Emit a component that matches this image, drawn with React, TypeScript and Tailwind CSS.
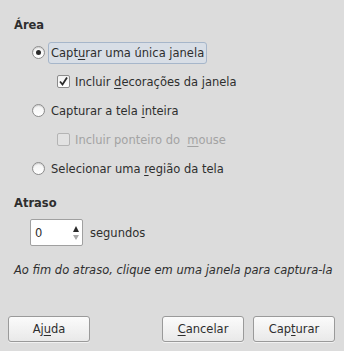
import React from 'react';

function Radio({ checked }: { checked?: boolean }) {
  return (
    <span className="w-[13px] h-[13px] rounded-full border border-[#8c8c8c] bg-gradient-to-b from-[#f2f2f2] to-white flex items-center justify-center shrink-0 shadow-[inset_0_1px_1px_rgba(0,0,0,0.15)]">
      {checked && <span className="w-[5px] h-[5px] rounded-full bg-[#2a2a2a]" />}
    </span>
  );
}

function Check({ checked, disabled }: { checked?: boolean; disabled?: boolean }) {
  return (
    <span
      className={
        disabled
          ? 'w-[13px] h-[13px] rounded-[2px] border border-[#b4b4b4] bg-[#e2e2e2] shrink-0'
          : 'w-[13px] h-[13px] rounded-[2px] border border-[#8c8c8c] bg-gradient-to-b from-[#f2f2f2] to-white flex items-center justify-center shrink-0'
      }
    >
      {checked && (
        <svg width="11" height="11" viewBox="0 0 11 11">
          <path d="M2 5.5 L4.5 8.5 L9 1.5" fill="none" stroke="#2a2a2a" strokeWidth="1.8" />
        </svg>
      )}
    </span>
  );
}

function Btn({ children }: { children: React.ReactNode }) {
  return (
    <button className="w-[82px] h-[26px] rounded-[3px] border border-[#9a9a9a] bg-gradient-to-b from-[#fbfbfb] to-[#e9e9e9] text-[#2e2e2e] flex items-center justify-center shadow-[0_1px_0_rgba(255,255,255,0.6)]">
      {children}
    </button>
  );
}

const U = ({ children }: { children: React.ReactNode }) => (
  <span className="underline underline-offset-2 decoration-1">{children}</span>
);

export default function App() {
  return (
    <div
      className="w-[344px] h-[351px] bg-[#dcdcdc] text-[#2e2e2e] text-[11.5px] leading-[14px] flex flex-col pt-[18px]"
      style={{ fontFamily: '"DejaVu Sans", sans-serif' }}
    >
      <div className="px-[14px] font-bold h-[14px]">Área</div>

      <div className="mt-[6px] flex flex-col">
        <div className="h-[29px] flex items-center pl-[32px]">
          <Radio checked />
          <span className="ml-[3px] h-[22px] px-[2px] flex items-center rounded-[3px] border border-[#a6b6ca] bg-[#d8dee6]">
            Capt<U>u</U>rar uma única janela
          </span>
        </div>
        <div className="h-[29px] flex items-center pl-[57px] gap-[5px]">
          <Check checked />
          <span>
            Incluir <U>d</U>ecorações da janela
          </span>
        </div>
        <div className="h-[29px] flex items-center pl-[32px] gap-[6px]">
          <Radio />
          <span>
            Capturar a tela <U>i</U>nteira
          </span>
        </div>
        <div className="h-[29px] flex items-center pl-[57px] gap-[5px] text-[#a3a3a3]">
          <Check disabled />
          <span className="whitespace-pre">
            Incluir ponteiro do  <U>m</U>ouse
          </span>
        </div>
        <div className="h-[29px] flex items-center pl-[32px] gap-[6px]">
          <Radio />
          <span>
            Selecionar uma <U>r</U>egião da tela
          </span>
        </div>
      </div>

      <div className="mt-[13px] px-[14px] font-bold h-[14px]">Atraso</div>

      <div className="mt-[9px] pl-[30px] flex items-center gap-[7px]">
        <div className="w-[53px] h-[27px] bg-white border border-[#a0a0a0] rounded-[2px] flex items-center justify-between pl-[4px] pr-[3px]">
          <span>0</span>
          <span className="flex flex-col items-center gap-[3px]">
            <svg width="6" height="6" viewBox="0 0 6 6">
              <path d="M3 0 L6 6 L0 6 Z" fill="#2a2a2a" />
            </svg>
            <svg width="6" height="5" viewBox="0 0 6 5">
              <path d="M0 0 L6 0 L3 5 Z" fill="#a8a8a8" />
            </svg>
          </span>
        </div>
        <span>segundos</span>
      </div>

      <div className="mt-[17px] px-[14px] italic h-[14px] whitespace-nowrap">
        Ao fim do atraso, clique em uma janela para captura-la
      </div>

      <div className="mt-[39px] px-[8px] flex items-center">
        <Btn>
          Aj<U>u</U>da
        </Btn>
        <div className="ml-auto flex gap-[9px] pr-[1px]">
          <Btn>
            <U>C</U>ancelar
          </Btn>
          <Btn>
            Cap<U>t</U>urar
          </Btn>
        </div>
      </div>
    </div>
  );
}
